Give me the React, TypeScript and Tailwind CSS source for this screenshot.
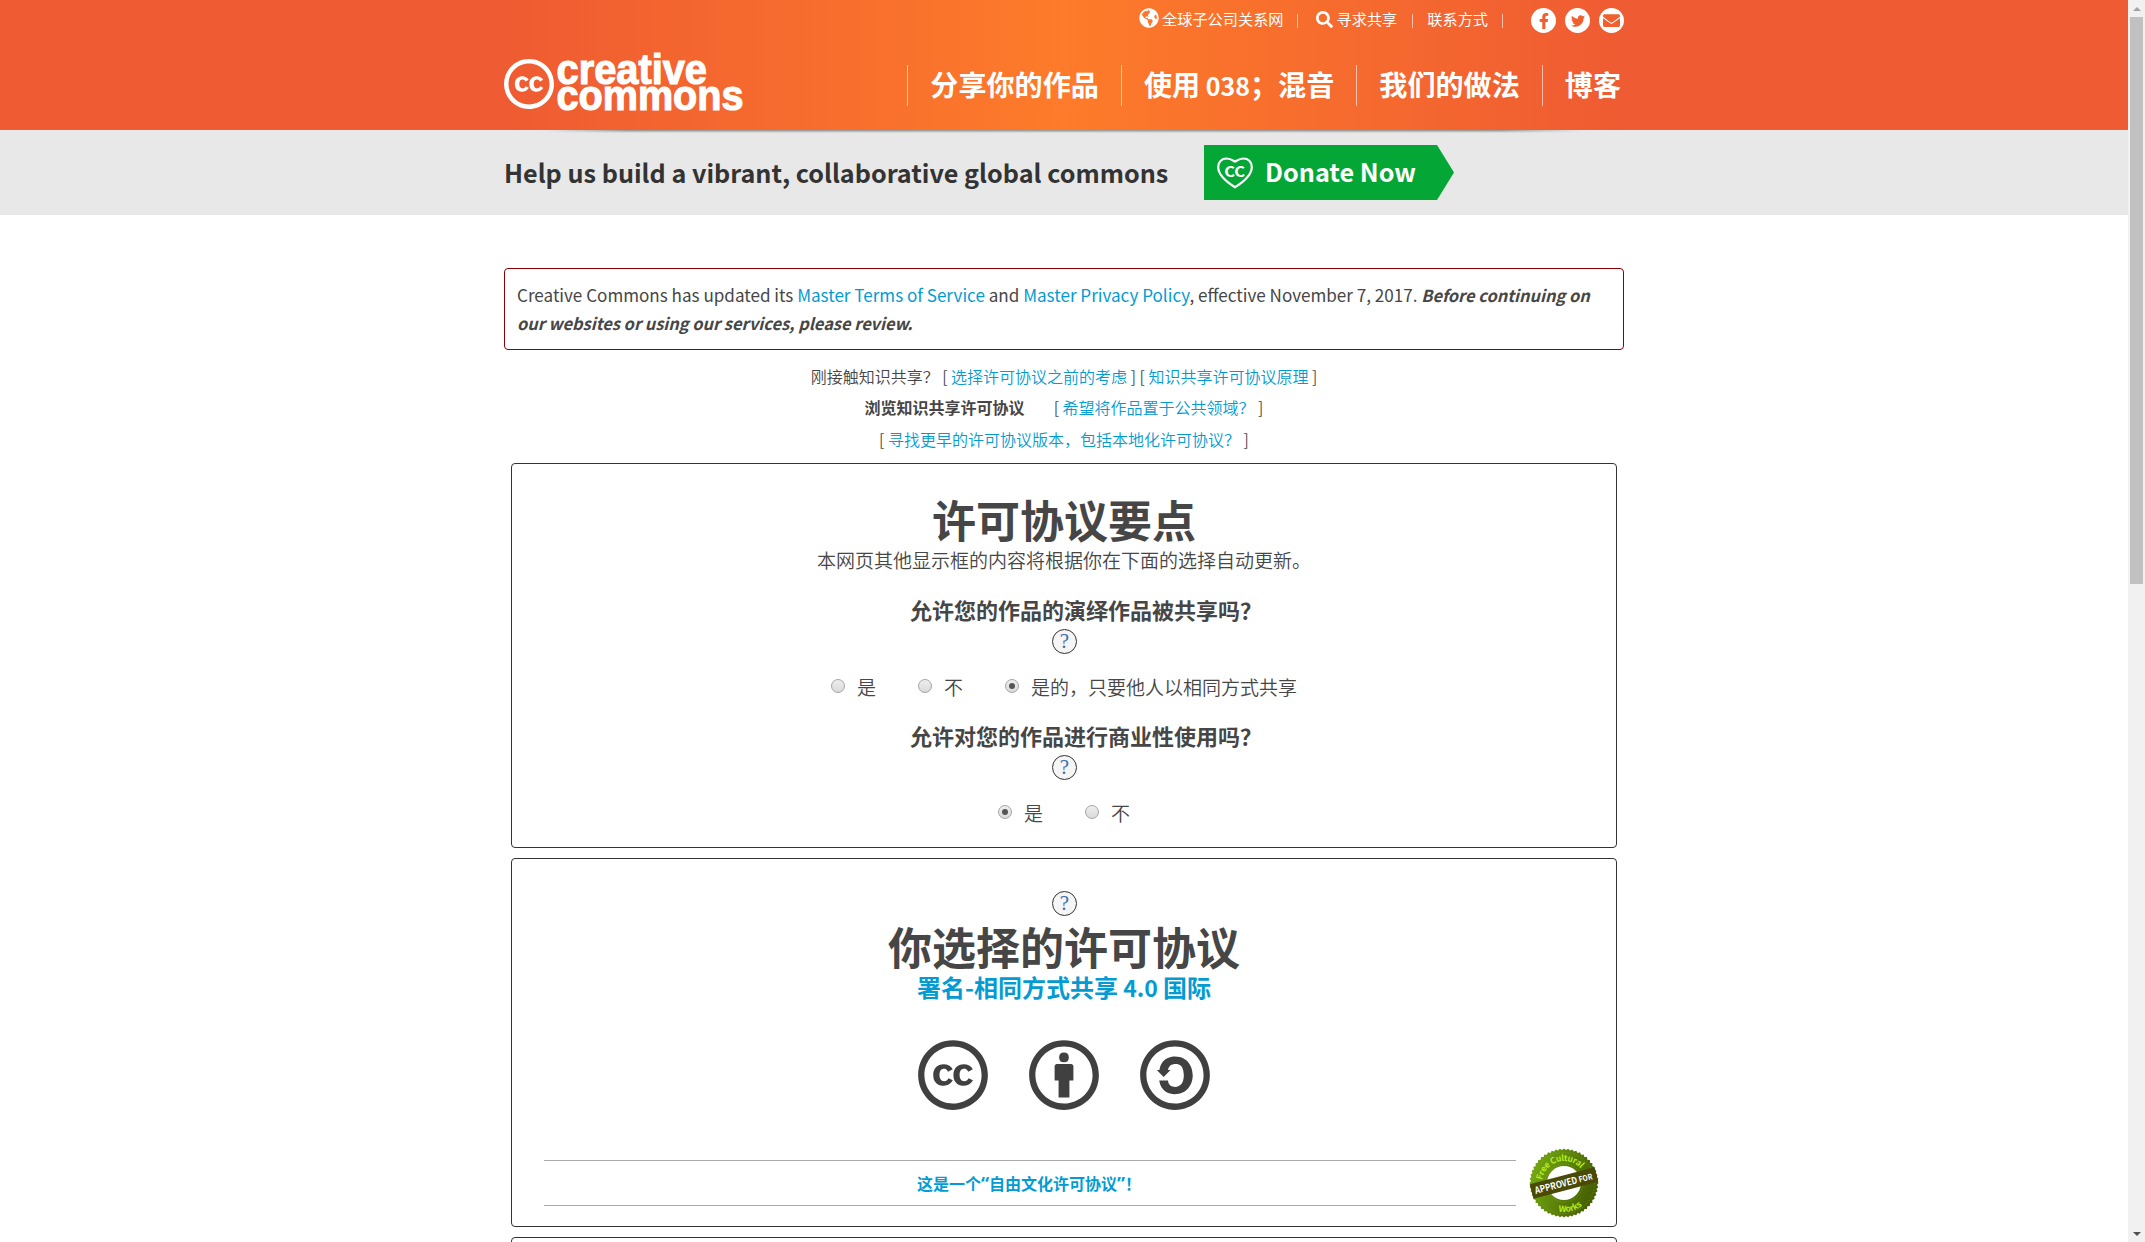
import React from "react";
import {
  FaCreativeCommons,
  FaCreativeCommonsBy,
  FaCreativeCommonsSa,
  FaEnvelope,
  FaFacebookF,
  FaGlobeAmericas,
  FaSearch,
  FaTwitter,
} from "react-icons/fa";

function TopBar() {
  return (
    <div className="flex h-[42px] items-start justify-end pt-2 text-[15.2px] leading-[21px] text-white">
      <FaGlobeAmericas className="mr-[3px] h-5 w-5" />
      <span>全球子公司关系网</span>
      <span className="mt-1.5 ml-[13px] h-[14px] w-px bg-white/60" />
      <FaSearch className="mt-[3px] mr-[4px] ml-[18px] h-[17px] w-[17px]" />
      <span>寻求共享</span>
      <span className="mt-1.5 ml-[15px] h-[14px] w-px bg-white/60" />
      <span className="ml-[14px]">联系方式</span>
      <span className="mt-1.5 ml-[14px] h-[14px] w-px bg-white/60" />
      <div className="ml-[28px] flex gap-[9px] text-[#f0602f]">
        <span className="flex h-[25px] w-[25px] items-center justify-center rounded-full bg-white">
          <FaFacebookF className="h-4 w-4" />
        </span>
        <span className="flex h-[25px] w-[25px] items-center justify-center rounded-full bg-white">
          <FaTwitter className="h-[14px] w-[14px]" />
        </span>
        <span className="flex h-[25px] w-[25px] items-center justify-center rounded-full bg-white">
          <FaEnvelope className="h-[17px] w-[17px]" />
        </span>
      </div>
    </div>
  );
}

function Logo() {
  return (
    <div className="flex text-white">
      <FaCreativeCommons className="mt-[16px] h-[52px] w-[50px]" />
      <svg className="mt-1 ml-0.5 h-[76px] w-[190px] overflow-visible fill-current stroke-current" strokeWidth="1.2" viewBox="0 0 190 76">
        <text x="0.5" y="37.5" fontSize="42.5" textLength="150.500" lengthAdjust="spacingAndGlyphs" className="font-['Liberation_Sans',sans-serif] font-bold">
          creative
        </text>
        <text x="0.5" y="63.500" fontSize="42.5" textLength="187" lengthAdjust="spacingAndGlyphs" className="font-['Liberation_Sans',sans-serif] font-bold">
          commons
        </text>
      </svg>
    </div>
  );
}

function Header() {
  return (
    <header className="relative z-10 h-[130px] bg-[linear-gradient(90deg,#ef5b32_504px,#fd7b2a_1064px,#ef5b32_1624px)]">
      <div className="mx-auto w-[1120px]">
        <TopBar />
        <div className="flex justify-between">
          <Logo />
          <nav className="mt-[23px] flex h-[41px] text-[28.1px] leading-[38px] font-bold text-white">
            <span className="border-l border-white/60 px-[22px]">分享你的作品</span>
            <span className="border-l border-white/60 px-[22px]">
              使用<span className="text-[25px]"> 038</span>；混音
            </span>
            <span className="border-l border-white/60 px-[22px]">我们的做法</span>
            <span className="border-l border-white/60 pr-[3px] pl-[22px]">博客</span>
          </nav>
        </div>
      </div>
      <div className="absolute top-[130px] left-[545px] h-[3px] w-[1038px] bg-linear-to-b from-[#8f9090] to-transparent mask-[linear-gradient(90deg,transparent,black_8%,black_92%,transparent)]" />
    </header>
  );
}

function Banner() {
  return (
    <div className="h-[85px] bg-[#e8e8e8]">
      <div className="mx-auto flex w-[1120px] pt-[15px]">
        <p className="w-[700px] text-[25.17px] leading-[55px] font-bold whitespace-nowrap text-[#333]">
          Help us build a vibrant, collaborative global commons
        </p>
        <a className="flex h-[55px] w-[250px] bg-[#04a635] pl-[13px] text-white [clip-path:polygon(0_0,233px_0,100%_50%,233px_100%,0_100%)]">
          <svg className="mt-[11px] h-[34px] w-[36px]" viewBox="0 0 36 34" fill="none">
            <path d="M18 31.2C8 25 1.2 18.500 1.200 11C1.200 5.500 5 2.500 9.500 2.500C13.500 2.500 16 4.500 18 5.600C20 4.500 22.500 2.500 26.500 2.500C31 2.500 34.800 5.500 34.800 11C34.800 18.500 28 25 18 31.200Z" stroke="white" strokeWidth="2.200" />
            <text x="7.200" y="20.500" fontSize="15" textLength="21" lengthAdjust="spacingAndGlyphs" fill="white" className="font-bold">CC</text>
          </svg>
          <span className="ml-[12px] text-[25.2px] leading-[52px] font-bold">Donate Now</span>
        </a>
      </div>
    </div>
  );
}

function Link({ children }: { children: React.ReactNode }) {
  return <a className="text-[#049bd3]">{children}</a>;
}

function Help() {
  return (
    <span className="mx-auto flex h-[25px] w-[25px] items-center justify-center rounded-full border border-[#333] bg-[#f5f5f5] pl-px font-['Liberation_Serif',serif] text-[21px] leading-none text-[#3a6fb7]">
      ?
    </span>
  );
}

function Radio({ label, checked = false }: { label: string; checked?: boolean }) {
  return (
    <label className="flex items-center gap-[12px]">
      <span className="mb-[2px] flex h-[14px] w-[14px] items-center justify-center rounded-full border border-[#a5a5a5] bg-linear-to-b from-[#eee] to-[#dadada]">
        {checked && <span className="h-1.5 w-1.5 rounded-full bg-[#555]" />}
      </span>
      {label}
    </label>
  );
}

const teeth = Array.from({ length: 104 }, (_, i) => {
  const r = i % 2 ? 33 : 34.6;
  const a = (i / 104) * Math.PI * 2;
  return `${(35 + r * Math.cos(a)).toFixed(2)},${(35 + r * Math.sin(a)).toFixed(2)}`;
}).join(" ");

function Seal() {
  return (
    <svg className="h-[72px] w-[70px]" viewBox="0 0 70 72">
      <defs>
        <linearGradient id="seal" x1="0" y1="0" x2="1" y2="0.3">
          <stop offset="0" stopColor="#79b013" />
          <stop offset="1" stopColor="#466003" />
        </linearGradient>
        <path id="sealTop" d="M13 35A22 22 0 0 1 57 35" />
        <path id="sealBottom" d="M6 35A29 29 0 0 0 64 35" />
      </defs>
      <polygon points={teeth} fill="url(#seal)" />
      <circle cx="35" cy="35" r="30.500" fill="none" stroke="#98c24a" strokeWidth="0.500" strokeDasharray="1.500 1.500" opacity="0.600" />
      <circle cx="35" cy="35" r="19" fill="none" stroke="#98c24a" strokeWidth="0.500" strokeDasharray="1.500 1.500" opacity="0.600" />
      <circle cx="35" cy="35" r="17" fill="white" />
      <g className="font-bold" fill="#b5ee1c" fontSize="8.500">
        <text>
          <textPath href="#sealTop" startOffset="3" textLength="50">Free Cultural</textPath>
        </text>
        <text>
          <textPath href="#sealBottom" startOffset="40" textLength="25">Works</textPath>
        </text>
      </g>
      <g transform="rotate(-14.500 35 35)">
        <rect x="1.500" y="27.500" width="67" height="15" fill="#4a4a08" />
        <text x="5" y="38.500" fontSize="9.500" fill="white" textLength="59" lengthAdjust="spacingAndGlyphs" className="font-bold">
          APPROVED <tspan fontSize="8">FOR</tspan>
        </text>
      </g>
    </svg>
  );
}

function Scrollbar() {
  return (
    <div className="flex w-[17px] flex-col items-center bg-[#f1f1f1]">
      <div className="flex h-[17px] items-center">
        <span className="h-0 w-0 border-x-4 border-b-4 border-x-transparent border-b-[#a3a3a3]" />
      </div>
      <div className="h-[567px] w-[13px] bg-[#c1c1c1]" />
      <div className="mt-auto flex h-[17px] items-center">
        <span className="h-0 w-0 border-x-4 border-t-4 border-x-transparent border-t-[#505050]" />
      </div>
    </div>
  );
}

export default function App() {
  return (
    <div className="flex h-[1242px] overflow-hidden bg-white font-['Noto_Sans_CJK_SC',sans-serif] text-[#464646]" lang="zh-CN">
      <div className="w-[2128px] flex-none">
        <Header />
        <Banner />
        <main className="mx-auto mt-[53px] w-[1120px]">
          <div className="h-[82px] rounded border border-[#8b0000] px-3 pt-3 text-[17.08px] leading-7">
            Creative Commons has updated its <Link>Master Terms of Service</Link> and{" "}
            <Link>Master Privacy Policy</Link>, effective November 7, 2017.{" "}
            <strong className="text-[16.4px] italic">
              Before continuing on
              <br />
              our websites or using our services, please review.
            </strong>
          </div>

          <div className="mt-[11px] text-center text-[16px] leading-[31px] font-[350]">
            <p>
              刚接触知识共享？ [ <Link>选择许可协议之前的考虑</Link> ] [ <Link>知识共享许可协议原理</Link> ]
            </p>
            <p>
              <strong className="mr-[29px] font-bold">浏览知识共享许可协议</strong>[ <Link>希望将作品置于公共领域？</Link> ]
            </p>
            <p className="mt-px">
              [ <Link>寻找更早的许可协议版本，包括本地化许可协议？</Link> ]
            </p>
          </div>

          <section className="mx-[7px] mt-[8px] h-[385px] rounded border border-[#333] pt-[31px] text-center text-[19px]">
            <h1 className="text-[44px] leading-[48px] font-bold">许可协议要点</h1>
            <p className="mt-px leading-[32px] font-[350]">本网页其他显示框的内容将根据你在下面的选择自动更新。</p>
            <h2 className="mt-[16px] mb-[3px] pl-[44px] text-[22px] leading-[34px] font-bold">允许您的作品的演绎作品被共享吗？</h2>
            <Help />
            <div className="mt-[17px] flex h-[32px] items-center justify-center gap-[42px] font-[350]">
              <Radio label="是" />
              <Radio label="不" />
              <Radio label="是的，只要他人以相同方式共享" checked />
            </div>
            <h2 className="mt-[15px] mb-[3px] pl-[44px] text-[22px] leading-[34px] font-bold">允许对您的作品进行商业性使用吗？</h2>
            <Help />
            <div className="mt-[17px] flex h-[32px] items-center justify-center gap-[42px] font-[350]">
              <Radio label="是" checked />
              <Radio label="不" />
            </div>
          </section>

          <section className="mx-[7px] mt-[10px] h-[369px] rounded border border-[#333] pt-[32px] text-center">
            <Help />
            <h1 className="mt-[6px] text-[44px] leading-[48px] font-bold">你选择的许可协议</h1>
            <h3 className="mt-[2px] text-[24px] leading-[30px] font-bold text-[#049bd3]">
              署名-相同方式共享<span className="text-[23px]"> 4.0 </span>国际
            </h3>
            <div className="mt-[37px] flex justify-center gap-[41px] text-[#404041]">
              <FaCreativeCommons className="h-[72px] w-[70px]" />
              <FaCreativeCommonsBy className="h-[72px] w-[70px]" />
              <FaCreativeCommonsSa className="h-[72px] w-[70px]" />
            </div>
            <div className="mt-[37px] ml-[32px] flex">
              <div className="mt-[12px] h-[46px] w-[972px] border-y border-[#aaa] text-left">
                <p className="pl-[373px] text-[16px] leading-[44px] font-bold text-[#049bd3]">
                  这是一个<span className="font-['Noto_Sans',sans-serif] text-[18px] leading-none">“</span>自由文化许可协议<span className="font-['Noto_Sans',sans-serif] text-[18px] leading-none">”</span>！
                </p>
              </div>
              <div className="ml-[13px]">
                <Seal />
              </div>
            </div>
          </section>

          <section className="mx-[7px] mt-[10px] h-[40px] rounded border border-[#333]" />
        </main>
      </div>
      <Scrollbar />
    </div>
  );
}
